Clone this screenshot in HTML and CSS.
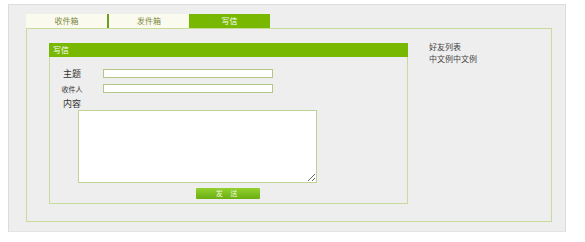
FILE: index.html
```html
<!DOCTYPE html>
<html lang="zh-CN">
<head>
  <meta charset="UTF-8">
  <meta name="viewport" content="width=device-width, initial-scale=1.0">
  <title>写信</title>
  <link rel="stylesheet" href="styles.css">
</head>
<body>

<div class="page">
  <!-- Tabs -->
  <div class="tabs">
    <div class="tab">收件箱</div>
    <div class="tab">发件箱</div>
    <div class="tab active">写信</div>
  </div>

  <div class="box">
    <!-- Write mail panel -->
    <div class="panel">
      <div class="panel-head">写信</div>
      <div class="panel-body">
        <div class="row">
          <label class="big" for="subject">主题</label>
          <input type="text" id="subject">
        </div>
        <div class="row">
          <label for="to">收件人</label>
          <input type="text" id="to">
        </div>
        <div class="row last">
          <label class="big" for="content">内容</label>
        </div>
        <textarea id="content"></textarea>
        <button type="button">发 送</button>
      </div>
    </div>

    <!-- Friends -->
    <div class="side">
      <p>好友列表</p>
      <p>中文例中文例</p>
    </div>
  </div>
</div>

</body>
</html>
```

FILE: styles.css
```css
/* Basic styles */
body {
  margin: 0;
  background-color: #fff;
  font-family: "Noto Sans CJK SC", "DejaVu Sans", sans-serif;
  font-size: 8px;
  color: #333;
}
.page {
  margin: 4px 0 0 8px;
  width: 556px;
  height: 217px;
  padding-top: 9px;
  background-color: #eeeeee;
  border: 1px solid #dcdcdc;
  border-bottom-color: #e4e4e4;
}
.tabs {
  display: flex;
  margin-left: 17px;
  height: 14px;
}
.tab {
  width: 80px;
  line-height: 14px;
  text-align: center;
  background-color: #fbfaee;
  color: #7d8a44;
  border-left: 2px solid #6f9c1c;
}
.tab:first-child {
  width: 81px;
  border-left: none;
}
.tab.active {
  width: 81px;
  border-left: none;
  background-color: #78b800;
  color: #fff;
}
.box {
  display: flex;
  margin-left: 17px;
  width: 524px;
  height: 192px;
  border: 1px solid #c6db9c;
}
.panel {
  margin: 14px 0 0 22px;
  width: 359px;
  height: 161px;
}
.panel-head {
  height: 14px;
  line-height: 14px;
  padding-left: 4px;
  background-color: #78b800;
  color: #fff;
}
.panel-body {
  height: 147px;
  box-sizing: border-box;
  border: 1px solid #c6db9c;
  border-top: none;
  padding-top: 12px;
}
.row {
  display: flex;
  align-items: center;
  height: 9px;
  margin-bottom: 6px;
}
.row.last {
  margin-bottom: 0;
}
label {
  width: 44px;
  text-align: center;
  font-size: 7px;
  color: #333;
}
label.big {
  font-size: 9px;
}
input {
  margin: 0 0 0 9px;
  width: 170px;
  height: 9px;
  padding: 0;
  box-sizing: border-box;
  border: 1px solid #b3c786;
  background-color: #fff;
}
textarea {
  display: block;
  margin: 2px 0 0 28px;
  width: 239px;
  height: 73px;
  padding: 0;
  box-sizing: border-box;
  border: 1px solid #c0d296;
  background-color: #fff;
}
button {
  display: block;
  margin: 5px 0 0 146px;
  width: 64px;
  height: 11px;
  padding: 0;
  border: none;
  border-radius: 1px;
  background: linear-gradient(#93d12f, #6aae12);
  color: #eaf6d6;
  font-family: inherit;
  font-size: 7px;
  line-height: 11px;
  letter-spacing: 3px;
  cursor: pointer;
}
.side {
  margin: 12px 0 0 21px;
}
.side p {
  margin: 0;
  font-size: 8px;
  line-height: 12px;
  color: #444;
}
```
